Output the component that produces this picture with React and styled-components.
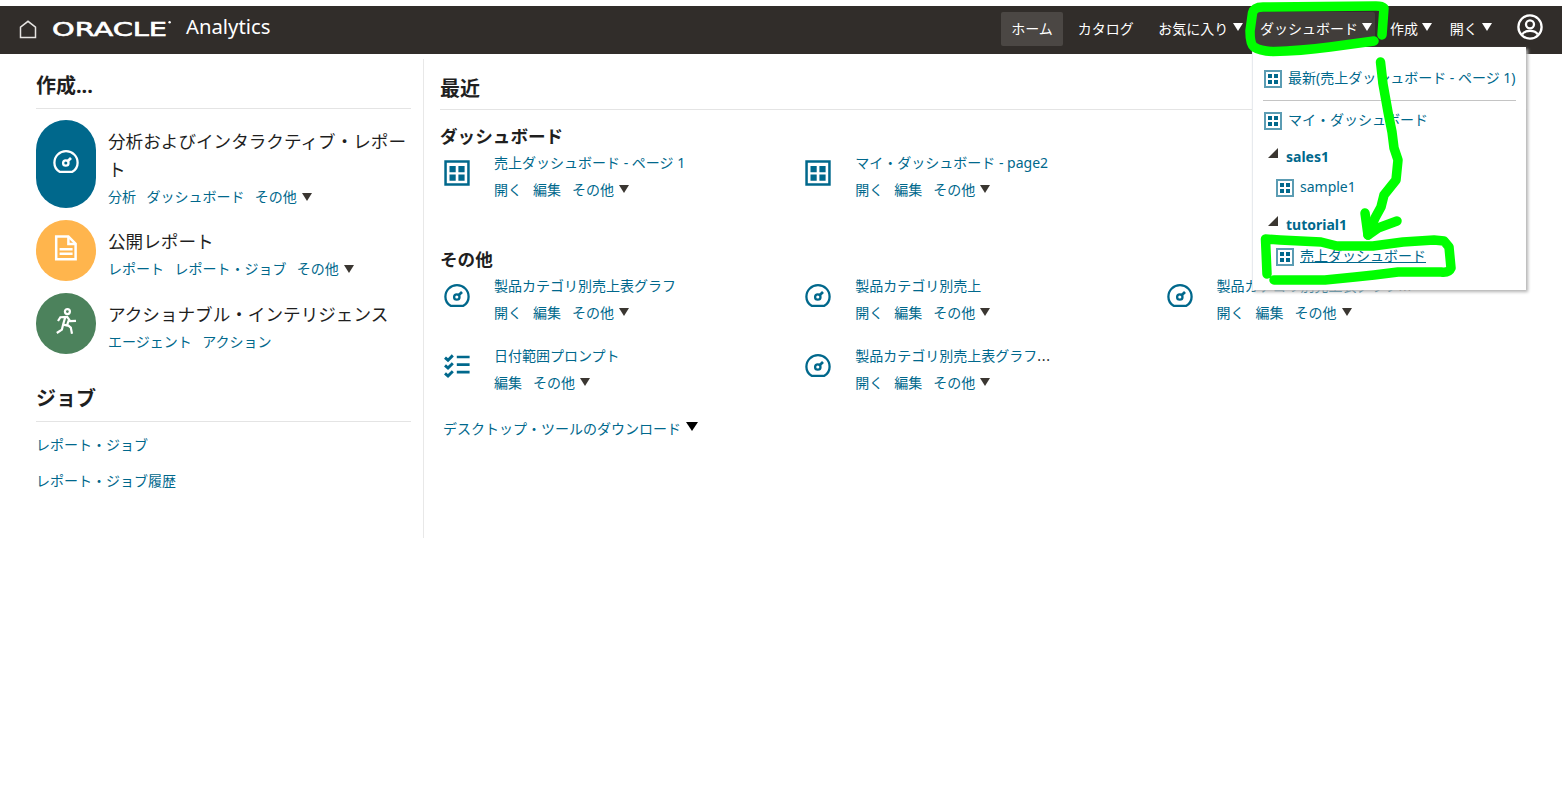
import React from "react";
import styled, { createGlobalStyle } from "styled-components";

const createCards = [
  {
    color: "#00688c",
    icon: "gauge",
    title: "分析およびインタラクティブ・レポート",
    links: ["分析", "ダッシュボード", "その他"],
    more: true,
  },
  {
    color: "#ffb54d",
    icon: "report",
    title: "公開レポート",
    links: ["レポート", "レポート・ジョブ", "その他"],
    more: true,
  },
  {
    color: "#4c825c",
    icon: "runner",
    title: "アクショナブル・インテリジェンス",
    links: ["エージェント", "アクション"],
  },
];

const dashboards = [
  { icon: "grid", title: "売上ダッシュボード - ページ 1", links: ["開く", "編集", "その他"] },
  { icon: "grid", title: "マイ・ダッシュボード - page2", links: ["開く", "編集", "その他"] },
];

const others = [
  { icon: "gauge", title: "製品カテゴリ別売上表グラフ", links: ["開く", "編集", "その他"] },
  { icon: "gauge", title: "製品カテゴリ別売上", links: ["開く", "編集", "その他"] },
  { icon: "gauge", title: "製品カテゴリ別売上表グラフ", cut: true, links: ["開く", "編集", "その他"] },
  { icon: "checklist", title: "日付範囲プロンプト", links: ["編集", "その他"] },
  { icon: "gauge", title: "製品カテゴリ別売上表グラフ", cut: true, links: ["開く", "編集", "その他"] },
];

function Icon({ name }) {
  if (name === "grid") {
    return (
      <svg width="26" height="26" viewBox="0 0 26 26" fill="currentColor">
        <path fillRule="evenodd" d="M0.3 0.3h25.4v25.4H0.3zM2.8 2.8v20.4h20.4V2.8z" />
        <path d="M5.5 6h6.2v6.2H5.5zM14.4 6h6.2v6.2h-6.2zM5.5 14.6h6.2v6.2H5.5zM14.4 14.6h6.2v6.2h-6.2z" />
      </svg>
    );
  }
  if (name === "gauge") {
    return (
      <svg width="26" height="26" viewBox="0 0 26 26" fill="none" stroke="currentColor" strokeWidth="2.3">
        <path d="M6.6 22.8C3.2 20.8 1.4 17.4 1.4 13.8 1.4 7 6.6 2.2 13 2.2S24.6 7 24.6 13.8c0 3.6-1.8 7-5.2 9z" strokeLinejoin="round" />
        <circle cx="12.8" cy="14" r="2.7" />
        <path d="M14.6 12.2l3.4-3.2" strokeWidth="2.7" />
      </svg>
    );
  }
  if (name === "checklist") {
    return (
      <svg width="26" height="26" viewBox="0 0 26 26" fill="none" stroke="currentColor" strokeWidth="2.7">
        <path d="M12.8 4h12.8M12.8 11.6h12.8M12.8 19.2h12.8" />
        <path d="M1 4.6l3 2.6 4.8-4.8M1 12.4l3 2.6 4.8-4.8M1 20.4l3 2.6 4.8-4.8" strokeWidth="2.9" />
      </svg>
    );
  }
  if (name === "report") {
    return (
      <svg width="26" height="26" viewBox="0 0 26 26" fill="none" stroke="currentColor" strokeWidth="2.5">
        <path d="M3.2 1.5h12.2l7.2 7.2v15.6H3.2z" />
        <path d="M15.4 2v7h7M6.6 14.2h13M6.6 18.8h13" />
      </svg>
    );
  }
  return (
    <svg width="26" height="26" viewBox="0 0 26 26" fill="none" stroke="currentColor" strokeWidth="2.2">
      <circle cx="14.4" cy="3.6" r="2.5" />
      <path d="M5 13l2.4-3.8 6.8-.4 3 4.4 5.8-.4M12.2 9.4l-2 6.8-1.3 5.4L3.8 25M16 11.6l-1.8 5 3.6 3L19 25.8M10.2 16.6l4.4 1" />
    </svg>
  );
}

function MenuIcon() {
  return (
    <svg width="18" height="18" viewBox="0 0 18 18">
      <path d="M1 1h16v16H1z" fill="#fff" stroke="#5b9cb3" strokeWidth="2" />
      <path d="M4 4h4v4H4zM10 4h4v4h-4zM4 10h4v4H4zM10 10h4v4h-4z" fill="#00688c" />
    </svg>
  );
}

function RecentItem({ item }) {
  return (
    <Item>
      <ItemIcon>
        <Icon name={item.icon} />
      </ItemIcon>
      <div>
        <ItemTitle>
          {item.title}
          {item.cut && <Ellipsis>...</Ellipsis>}
        </ItemTitle>
        <Links>
          {item.links.map((link) => (
            <a key={link}>{link}</a>
          ))}
          <Caret />
        </Links>
      </div>
    </Item>
  );
}

function App() {
  return (
    <Page>
      <GlobalStyle />
      <Header>
        <HomeIcon width="18" height="19" viewBox="0 0 18 19">
          <path d="M1.5 17.6V7.2L9 1.3l7.5 5.9v10.4z" fill="none" stroke="#e6e4e2" strokeWidth="1.5" />
        </HomeIcon>
        <Logo width="120" height="20" viewBox="0 0 120 20">
          <text x="-1" y="17.8" textLength="115" lengthAdjust="spacingAndGlyphs">ORACLE</text>
          <circle cx="116.6" cy="4.2" r="1.2" />
        </Logo>
        <Product>Analytics</Product>
        <Nav>
          <NavItem $active>ホーム</NavItem>
          <NavItem>カタログ</NavItem>
          <NavItem $menu>お気に入り<NavCaret /></NavItem>
          <NavItem $menu $open>ダッシュボード<NavCaret /></NavItem>
          <NavItem $menu>作成<NavCaret /></NavItem>
          <NavItem $menu>開く<NavCaret /></NavItem>
        </Nav>
        <Avatar width="26" height="26" viewBox="0 0 26 26" fill="none" stroke="#fff" strokeWidth="2.3">
          <circle cx="13" cy="13" r="11.6" />
          <circle cx="13" cy="10.3" r="4" />
          <path d="M5.2 20.6c1.4-2.8 4.4-3.8 7.8-3.8s6.4 1 7.8 3.8" />
        </Avatar>
      </Header>

      <Main>
        <Side>
          <Heading>作成...</Heading>
          <Cards>
            {createCards.map((card) => (
              <Card key={card.title}>
                <Badge $color={card.color}>
                  <Icon name={card.icon} />
                </Badge>
                <CardBody>
                  <CardTitle>{card.title}</CardTitle>
                  <Links $compact>
                    {card.links.map((link) => (
                      <a key={link}>{link}</a>
                    ))}
                    {card.more && <Caret />}
                  </Links>
                </CardBody>
              </Card>
            ))}
          </Cards>
          <Heading>ジョブ</Heading>
          <JobLinks>
            <a>レポート・ジョブ</a>
            <a>レポート・ジョブ履歴</a>
          </JobLinks>
        </Side>

        <Content>
          <Heading $wide>最近</Heading>
          <SubHeading>ダッシュボード</SubHeading>
          <ItemGrid $space={30}>
            {dashboards.map((item, i) => (
              <RecentItem key={i} item={item} />
            ))}
          </ItemGrid>
          <SubHeading>その他</SubHeading>
          <ItemGrid $space={19}>
            {others.map((item, i) => (
              <RecentItem key={i} item={item} />
            ))}
          </ItemGrid>
          <Download>
            デスクトップ・ツールのダウンロード
            <DownloadCaret />
          </Download>
        </Content>
      </Main>

      <Menu>
        <MenuRow $height={43}>
          <MenuIcon />
          <span>最新(売上ダッシュボード - ページ 1)</span>
        </MenuRow>
        <Separator />
        <MenuRow $height={40}>
          <MenuIcon />
          <span>マイ・ダッシュボード</span>
        </MenuRow>
        <Folder>
          <Disclosure />
          sales1
        </Folder>
        <MenuRow $height={30} $nested>
          <MenuIcon />
          <span>sample1</span>
        </MenuRow>
        <Folder>
          <Disclosure />
          tutorial1
        </Folder>
        <MenuRow $height={32} $nested $hover>
          <MenuIcon />
          <span>売上ダッシュボード</span>
        </MenuRow>
      </Menu>

      <Marker width="1562" height="300" viewBox="0 0 1562 300">
        <path d="M1382 35L1384 8Q1382 6 1376 6L1263 7Q1254 7 1252.500 13L1250 31Q1250 44 1254 47Q1260 51 1273 51.500Q1300 51 1330 47L1374 41" />
        <path d="M1380.500 62L1383 84L1388 112L1392 132L1394 148L1398 160L1396 180L1384 195L1381 207L1375 218L1368 235" />
        <path d="M1365 213L1368 235L1378 228L1397 221" />
        <path d="M1267 274L1265.500 239L1280 240L1321 242L1337 246L1373 246L1403 242L1434 240L1444 241L1449 247L1451 268Q1449 273 1441 272L1398 272L1374 275L1355 277L1325 280L1274 280" />
      </Marker>
    </Page>
  );
}

export default App;

const GlobalStyle = createGlobalStyle`
  body {
    margin: 0;
    background: #fff;
    color: #1f1f1f;
    font-family: "Noto Sans", "Noto Sans CJK JP", sans-serif;
    font-size: 14px;
    line-height: 28px;
  }

  svg {
    display: block;
    flex-shrink: 0;
  }

  a {
    color: #00688c;
    cursor: pointer;
    white-space: nowrap;
  }
`;

const Page = styled.div`
  position: relative;
  width: 1562px;
  height: 800px;
  padding-top: 6px;
  box-sizing: border-box;
  overflow: hidden;
`;

const Header = styled.header`
  display: flex;
  height: 48px;
  padding: 0 19px;
  background: #312d2a;
  color: #fff;
`;

const HomeIcon = styled.svg`
  margin-top: 14px;
`;

const Logo = styled.svg`
  margin: 12px 0 0 16px;
  fill: #fff;
  overflow: visible;

  text {
    font-family: "DejaVu Sans", sans-serif;
    font-size: 20px;
    stroke: #fff;
    stroke-width: 0.6px;
  }
`;

const Product = styled.div`
  margin-left: 13px;
  padding-top: 6px;
  font-size: 20.3px;
`;

const Nav = styled.nav`
  display: flex;
  gap: 5px;
  height: 34px;
  margin: 6px 0 0 auto;
`;

const NavItem = styled.a`
  display: flex;
  align-items: center;
  box-sizing: border-box;
  padding: ${(props) => (props.$menu ? "0 3px 0 9.5px" : "0 10px")};
  border-radius: 2px;
  color: #fff;
  background: ${(props) => (props.$active ? "#4b4744" : props.$open ? "#413d3a" : "none")};
`;

const Caret = styled.i`
  flex-shrink: 0;
  width: 0;
  height: 0;
  margin: 0 0 1px 5px;
  border: solid transparent;
  border-width: 8px 5.5px 0;
  border-top-color: #3a3631;
`;

const NavCaret = styled(Caret)`
  margin: 0 0 4px 4.3px;
  border-top-color: #fff;
`;

const DownloadCaret = styled(Caret)`
  margin-bottom: 5px;
  border-width: 9px 6px 0;
  border-top-color: #000;
`;

const Avatar = styled.svg`
  margin: 8px 0 0 22px;
`;

const Main = styled.main`
  display: flex;
  padding: 5px 0 0 36px;
`;

const Side = styled.aside`
  width: 375px;
  height: 479px;
  padding-right: 12px;
  border-right: 1px solid #e8e8e8;
`;

const Heading = styled.h1`
  height: ${(props) => (props.$wide ? "51px" : "50px")};
  box-sizing: border-box;
  margin: 0;
  padding-top: ${(props) => (props.$wide ? "16px" : "13px")};
  border-bottom: 1px solid #e4e4e4;
  font-size: 20px;
  font-weight: 700;
`;

const Cards = styled.div`
  display: flex;
  flex-direction: column;
  gap: 12px;
  padding: 11px 0 18px;
`;

const Card = styled.div`
  display: flex;
  min-height: 61px;
`;

const Badge = styled.div`
  display: flex;
  align-items: center;
  justify-content: center;
  flex-shrink: 0;
  width: 60px;
  padding-bottom: 5px;
  box-sizing: border-box;
  border-radius: 30px;
  color: #fff;
  background: ${(props) => props.$color};
`;

const CardBody = styled.div`
  padding: 7px 0 0 12px;
`;

const CardTitle = styled.div`
  font-size: 17.6px;
  line-height: 28px;
`;

const Links = styled.div`
  display: flex;
  align-items: center;
  height: ${(props) => (props.$compact ? "28px" : "27px")};
  margin-bottom: ${(props) => (props.$compact ? "-3px" : "0")};

  a + a {
    margin-left: ${(props) => (props.$compact ? "10.4px" : "11px")};
  }
`;

const JobLinks = styled.div`
  display: flex;
  flex-direction: column;
  gap: 8px;
  padding-top: 9px;
`;

const Content = styled.section`
  width: 1087px;
  margin-left: 16px;
`;

const SubHeading = styled.h2`
  height: 39px;
  margin: 0;
  padding-top: 12px;
  box-sizing: border-box;
  font-size: 17.6px;
  font-weight: 700;
`;

const ItemGrid = styled.div`
  display: grid;
  grid-template-columns: repeat(3, 361.3px);
  row-gap: 16px;
  padding-bottom: ${(props) => props.$space}px;
`;

const Item = styled.div`
  display: flex;
  height: 54px;
`;

const ItemIcon = styled.div`
  width: 54px;
  padding: 11px 0 0 4px;
  box-sizing: border-box;
  color: #00688c;
`;

const ItemTitle = styled.a`
  display: block;
  line-height: 27px;
`;

const Ellipsis = styled.span`
  color: #1f1f1f;
  letter-spacing: 0.7px;
`;

const Download = styled.a`
  display: flex;
  align-items: center;
  padding-left: 3px;
`;

const Menu = styled.div`
  position: absolute;
  top: 47px;
  left: 1252px;
  width: 274px;
  height: 243px;
  padding: 10px 10px 0 11px;
  box-sizing: border-box;
  border-left: 1px solid #e7eaee;
  background: #fff;
  box-shadow: 2px 2px 3px 0 #b4b4b4;
  color: #00688c;
`;

const MenuRow = styled.a`
  display: flex;
  align-items: center;
  gap: 6px;
  height: ${(props) => props.$height}px;
  margin-bottom: ${(props) => (props.$nested ? "6px" : "0")};
  padding-left: ${(props) => (props.$nested ? "12px" : "0")};
  text-decoration: ${(props) => (props.$hover ? "underline" : "none")};

  span {
    padding-bottom: 2px;
  }
`;

const Separator = styled.div`
  height: 1px;
  margin-left: -1px;
  background: #c4c4c4;
`;

const Folder = styled.div`
  display: flex;
  align-items: center;
  gap: 8px;
  height: 32px;
  padding-left: 4px;
  font-weight: 700;
`;

const Disclosure = styled.i`
  margin-bottom: 8px;
  border: solid transparent;
  border-width: 0 0 10px 10px;
  border-bottom-color: #3a3631;
`;

/* freehand marks drawn over the page */
const Marker = styled.svg`
  position: absolute;
  top: 0;
  left: 0;
  fill: none;
  stroke: #00ff00;
  stroke-width: 9.5px;
  stroke-linecap: round;
  stroke-linejoin: round;
  pointer-events: none;
`;
